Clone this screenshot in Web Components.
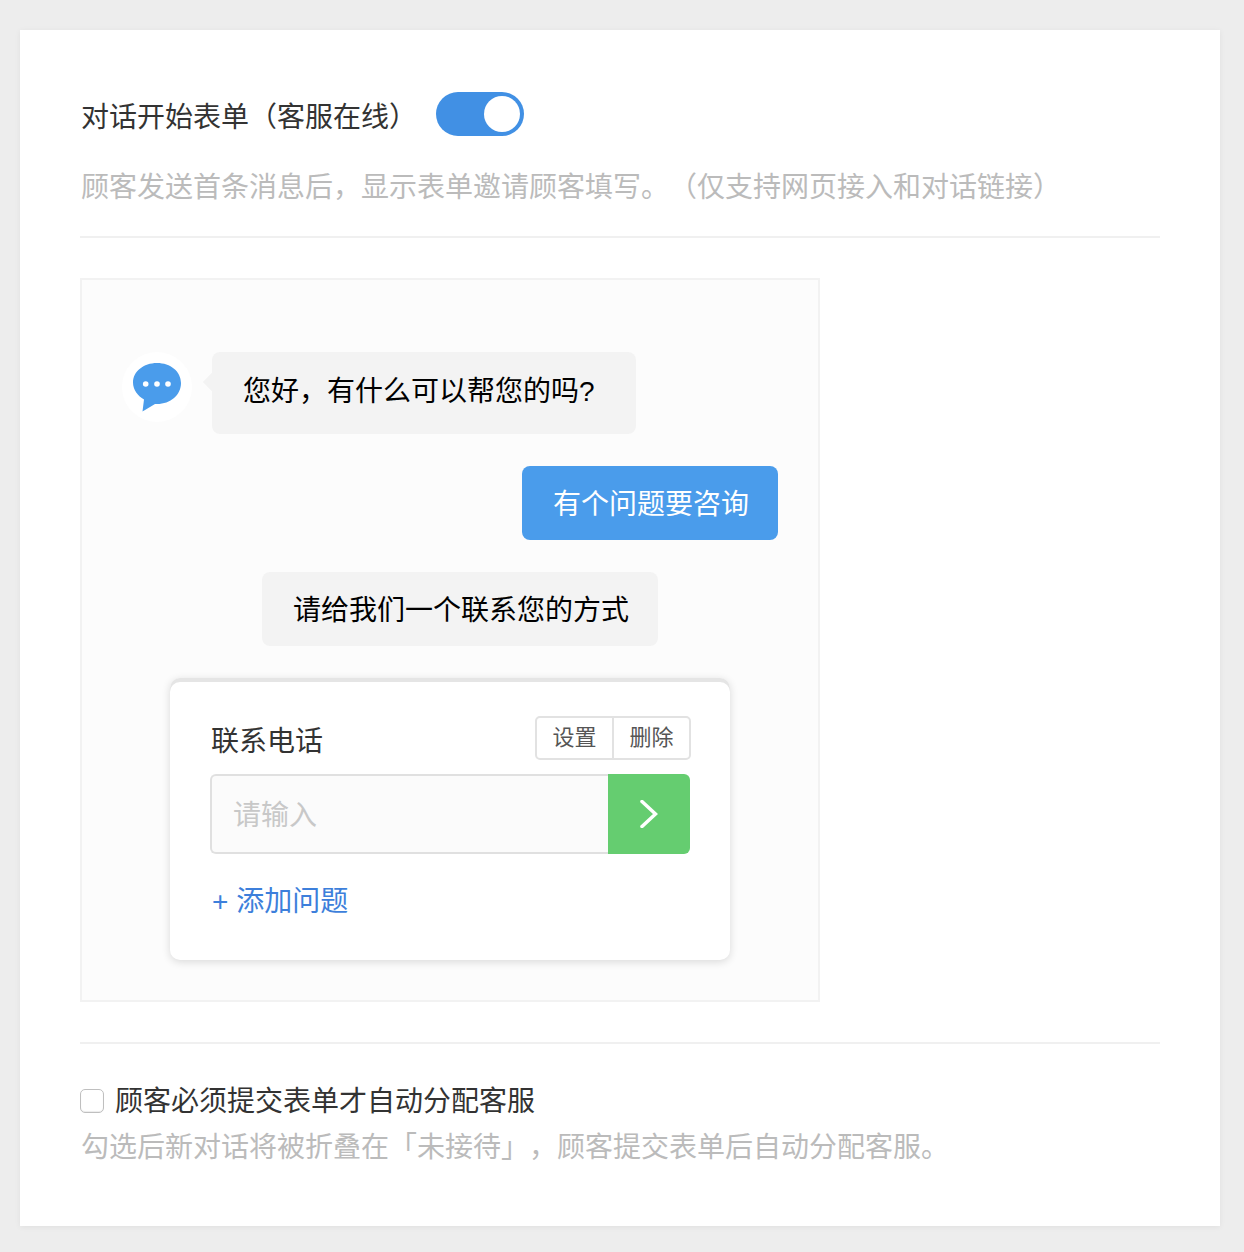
<!DOCTYPE html>
<html lang="zh">
<head>
<meta charset="utf-8">
<title>对话开始表单</title>
<style>
html, body { margin: 0; padding: 0; background: #ededed; }
body {
	padding: 30px 24px 26px 20px;
	font-family: "Liberation Sans", "Noto Sans CJK SC", sans-serif;
	font-size: 28px;
	color: #333;
	text-spacing-trim: space-all;
}
</style>
</head>
<body>
<form-panel>
	<span slot="title">对话开始表单（客服在线）</span>
	<span slot="desc">顾客发送首条消息后，显示表单邀请顾客填写。（仅支持网页接入和对话链接）</span>
	<chat-preview slot="preview">
		<chat-bubble kind="first" avatar>您好，有什么可以帮您的吗?</chat-bubble>
		<chat-bubble kind="user">有个问题要咨询</chat-bubble>
		<chat-bubble kind="ask">请给我们一个联系您的方式</chat-bubble>
		<form-card label="联系电话" placeholder="请输入" add="添加问题"></form-card>
	</chat-preview>
	<span slot="check">顾客必须提交表单才自动分配客服</span>
	<span slot="hint">勾选后新对话将被折叠在「未接待」，顾客提交表单后自动分配客服。</span>
</form-panel>

<script>
class FormPanel extends HTMLElement {
	constructor() {
		super();
		this.attachShadow({ mode: "open" });
		this.shadowRoot.innerHTML = `
    <style>
    :host {
      display: block;
      width: 1200px;
      height: 1196px;
      box-sizing: border-box;
      padding: 62px 60px 0;
      background: #fff;
      box-shadow: 0 1px 6px rgba(0,0,0,0.06);
    }
    .head {
      display: flex;
      align-items: center;
      height: 44px;
      line-height: 44px;
      color: #333;
    }
    .head ::slotted(span) { padding: 8px 0 0 1px; }
    .head x-switch { margin-left: 19px; }
    .desc {
      margin-top: 32px;
      padding-left: 1px;
      height: 38px;
      line-height: 40px;
      color: #bbb;
      white-space: nowrap;
    }
    hr {
      border: none;
      height: 2px;
      margin: 0;
      background: #f0f0f0;
    }
    .top-line { margin: 30px 0 40px; }
    .bottom-line { margin: 40px 0 0; }
    .check {
      display: flex;
      align-items: center;
      margin-top: 36px;
      height: 40px;
      line-height: 40px;
      color: #333;
    }
    .check ::slotted(span) { padding-top: 4px; }
    .box {
      width: 24px;
      height: 24px;
      box-sizing: border-box;
      margin: 2px 11px 0 0;
      border: 1px solid #bfbfbf;
      border-radius: 5px;
      background: #fff;
      box-shadow: inset 0 -1px 1px rgba(0,0,0,0.08);
    }
    .hint {
      margin: 8px 0 0 1px;
      height: 40px;
      line-height: 40px;
      color: #bbb;
      white-space: nowrap;
    }
    </style>
    <div class="head"><slot name="title"></slot><x-switch></x-switch></div>
    <div class="desc"><slot name="desc"></slot></div>
    <hr class="top-line">
    <slot name="preview"></slot>
    <hr class="bottom-line">
    <div class="check"><span class="box"></span><slot name="check"></slot></div>
    <div class="hint"><slot name="hint"></slot></div>
    `;
	}
}
customElements.define("form-panel", FormPanel);

class XSwitch extends HTMLElement {
	constructor() {
		super();
		this.attachShadow({ mode: "open" });
		this.shadowRoot.innerHTML = `
    <style>
    :host {
      display: flex;
      justify-content: flex-end;
      align-items: center;
      width: 88px;
      height: 44px;
      box-sizing: border-box;
      padding-right: 4px;
      border-radius: 22px;
      background: #4190e4;
    }
    i {
      display: block;
      width: 36px;
      height: 36px;
      border-radius: 50%;
      background: #fff;
    }
    </style>
    <i></i>
    `;
	}
}
customElements.define("x-switch", XSwitch);

class ChatPreview extends HTMLElement {
	constructor() {
		super();
		this.attachShadow({ mode: "open" });
		this.shadowRoot.innerHTML = `
    <style>
    :host {
      display: flex;
      flex-direction: column;
      width: 740px;
      height: 724px;
      box-sizing: border-box;
      padding: 72px 40px 0 40px;
      border: 2px solid #f2f2f2;
      background: #fcfcfc;
    }
    </style>
    <slot></slot>
    `;
	}
}
customElements.define("chat-preview", ChatPreview);

class ChatBubble extends HTMLElement {
	constructor() {
		super();
		this.attachShadow({ mode: "open" });
		this.shadowRoot.innerHTML = `
    <style>
    :host {
      display: flex;
      align-items: flex-start;
      line-height: 42px;
      color: #000;
    }
    :host([kind="first"]) { margin-bottom: 32px; }
    :host([kind="user"]) { justify-content: flex-end; margin-bottom: 32px; }
    :host([kind="ask"]) { margin: 0 0 32px 140px; }
    .avatar {
      flex: none;
      width: 70px;
      height: 70px;
      margin-right: 20px;
      border-radius: 50%;
      background: #fff;
    }
    .avatar svg { display: block; }
    .text {
      position: relative;
      padding: 18px 29px 14px 31px;
      border-radius: 8px;
      background: #f3f3f3;
      white-space: nowrap;
    }
    :host([kind="first"]) .text { padding: 19px 41px 21px 31px; }
    :host([kind="first"]) .text::before {
      content: "";
      position: absolute;
      left: -9px;
      top: 21px;
      width: 18px;
      height: 18px;
      background: #f3f3f3;
      transform: rotate(45deg) scale(0.72);
    }
    :host([kind="user"]) .text {
      background: #4a9ceb;
      color: #fff;
    }
    </style>
    ${this.hasAttribute("avatar") ? `<div class="avatar"><svg width="70" height="70" viewBox="0 0 70 70">
      <path fill="#4a9ceb" d="M35 11C21.500 11 11 19.500 11 30.500C11 38 16 44 22 47.500L20.500 59.500L33 52C34 52 35 52 35 52C48.500 52 59 43 59 31C59 19.500 48.500 11 35 11Z"/>
      <circle cx="23.700" cy="32" r="2.800" fill="#fff"/><circle cx="35" cy="32" r="2.800" fill="#fff"/><circle cx="46" cy="32" r="2.800" fill="#fff"/>
    </svg></div>` : ""}
    <div class="text"><slot></slot></div>
    `;
	}
}
customElements.define("chat-bubble", ChatBubble);

class FormCard extends HTMLElement {
	constructor() {
		super();
		this.attachShadow({ mode: "open" });
		const attr = (n) => this.getAttribute(n);
		this.shadowRoot.innerHTML = `
    <style>
    :host {
      display: block;
      width: 560px;
      height: 282px;
      box-sizing: border-box;
      margin-left: 48px;
      padding: 38px 40px 0 40px;
      border-radius: 10px;
      background: #fff;
      box-shadow: inset 0 4px 0 #e5e5e5, 0 2px 8px rgba(0,0,0,0.14);
    }
    .row {
      display: flex;
      justify-content: space-between;
      align-items: center;
      height: 44px;
    }
    .label { margin-left: 1px; color: #333; margin-top: 1px; }
    .btns {
      display: flex;
      margin-right: -1px;
      height: 44px;
      box-sizing: border-box;
      border: 2px solid #e2e2e2;
      border-radius: 5px;
      font-size: 22px;
      line-height: 40px;
      color: #555;
    }
    .btns span { width: 75px; text-align: center; }
    .btns span + span { border-left: 2px solid #e2e2e2; }
    .input {
      display: flex;
      height: 80px;
      margin-top: 14px;
    }
    .field {
      flex: 1;
      box-sizing: border-box;
      padding: 2px 0 0 21px;
      border: 2px solid #e0e0e0;
      border-right: none;
      border-radius: 6px 0 0 6px;
      background: #fbfbfb;
      line-height: 76px;
      color: #c8c8c8;
    }
    .go {
      display: flex;
      justify-content: center;
      align-items: center;
      width: 82px;
      border-radius: 0 6px 6px 0;
      background: #65cd70;
    }
    .add {
      margin: 27px 0 0 2px;
      line-height: 42px;
      color: #3d7fdb;
    }
    </style>
    <div class="row">
      <span class="label">${attr("label")}</span>
      <div class="btns"><span>设置</span><span>删除</span></div>
    </div>
    <div class="input">
      <div class="field">${attr("placeholder")}</div>
      <div class="go"><svg width="18" height="28" viewBox="0 0 18 28"><path d="M2 1.500L15.500 14L2 26.500" fill="none" stroke="#fff" stroke-width="3.500" stroke-linecap="round" stroke-linejoin="miter"/></svg></div>
    </div>
    <div class="add">+ ${attr("add")}</div>
    `;
	}
}
customElements.define("form-card", FormCard);
</script>
</body>
</html>
